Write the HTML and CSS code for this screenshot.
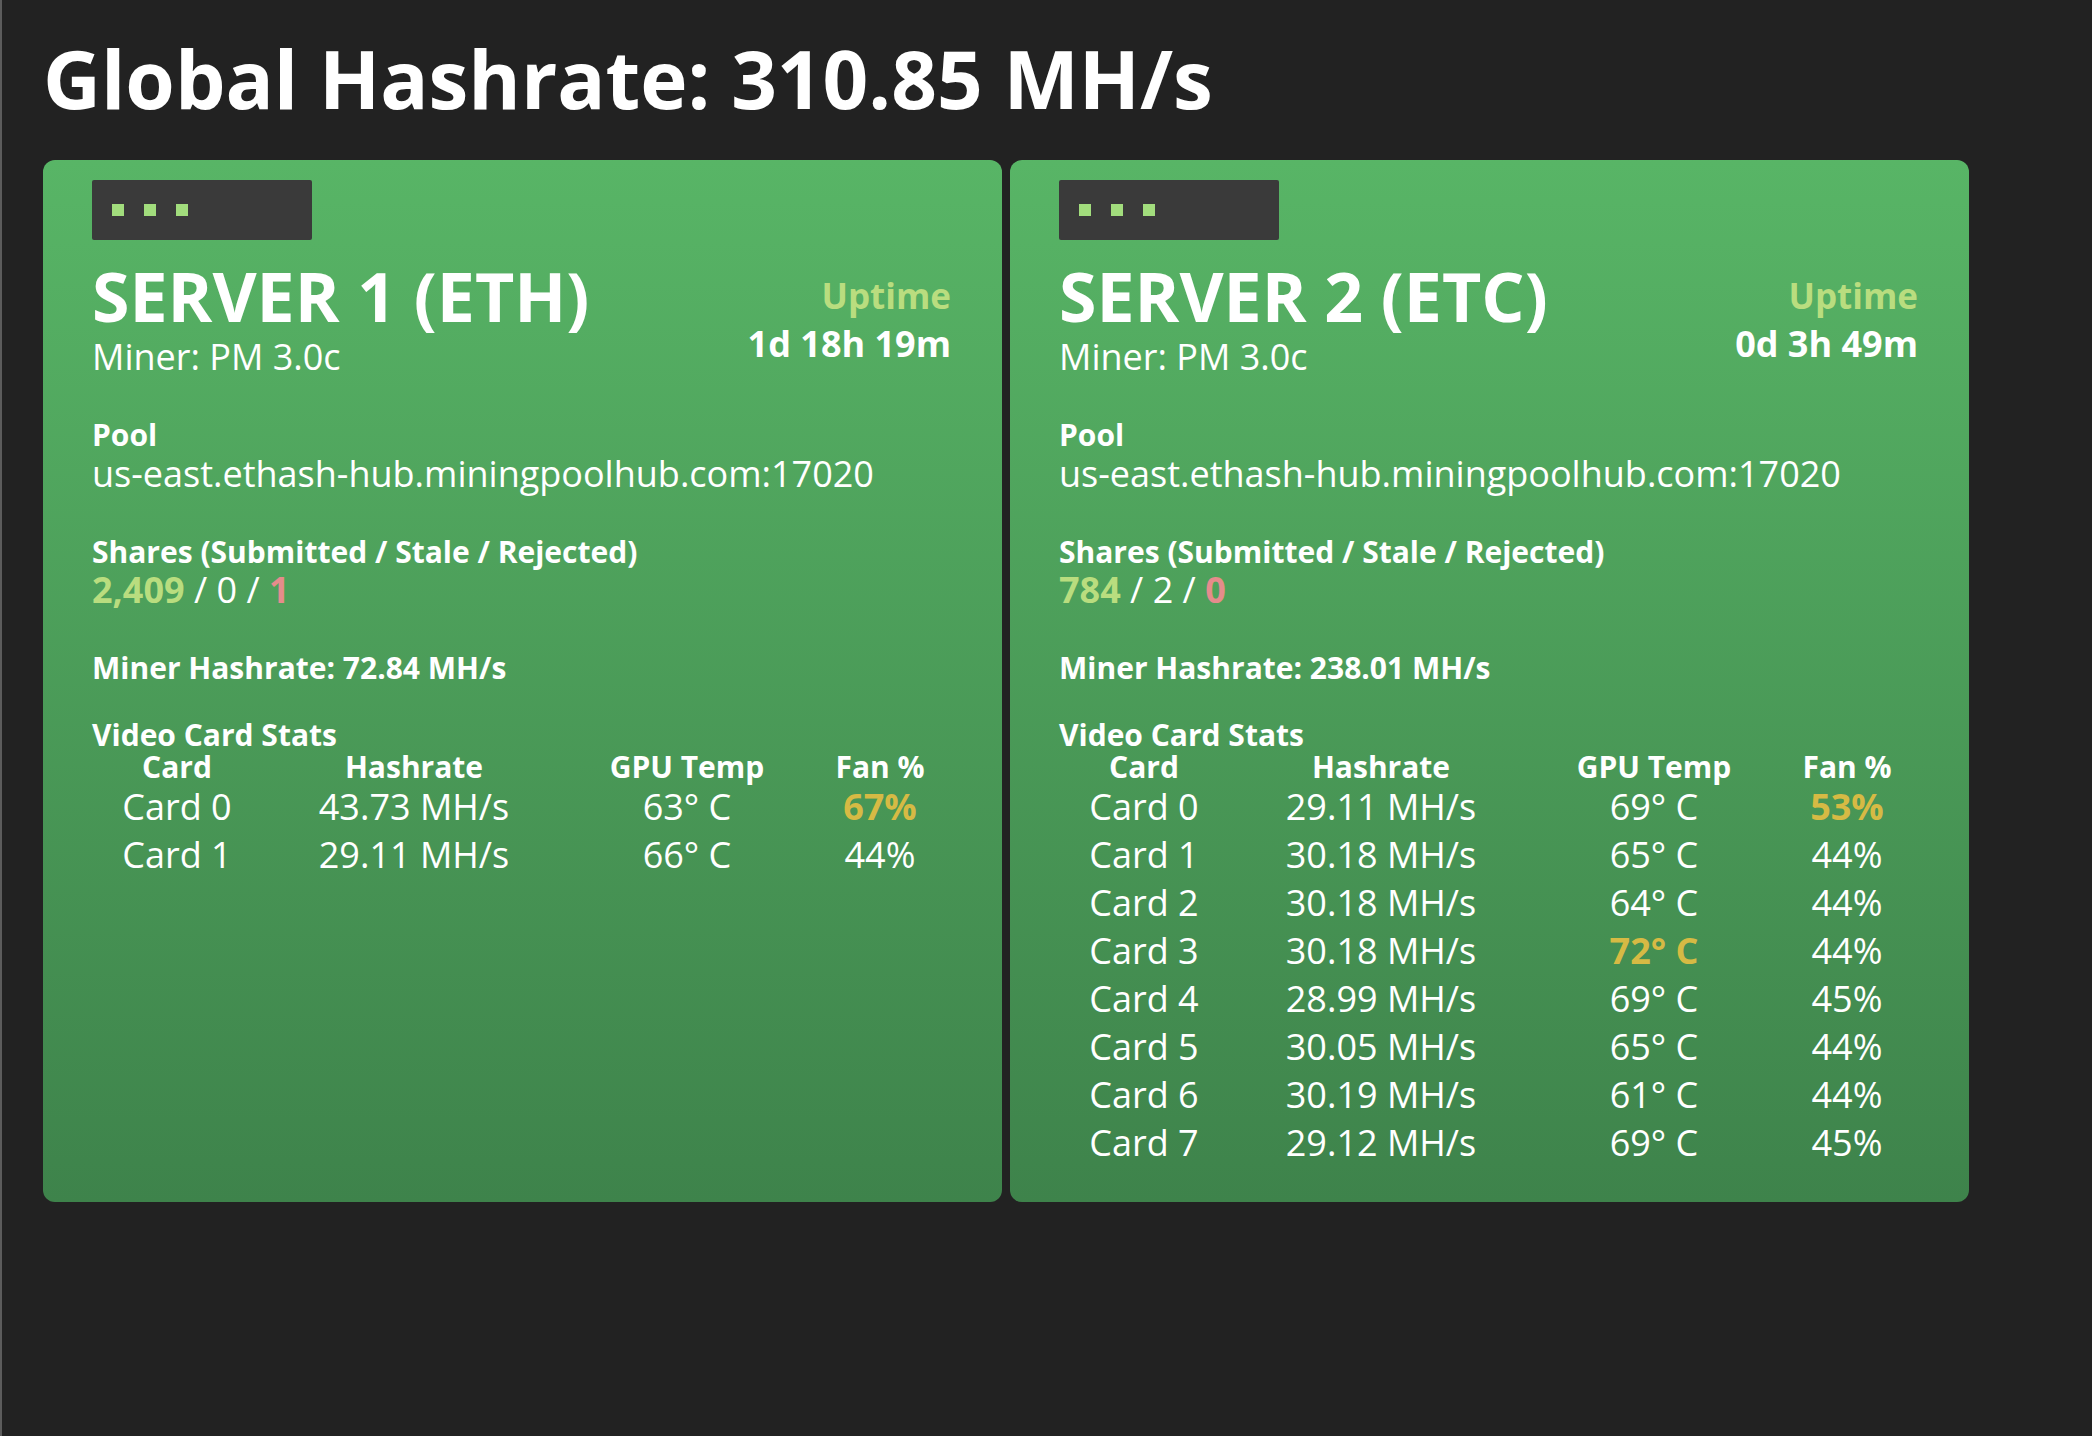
FILE: index.html
```html
<!DOCTYPE html>
<html>
<head>
<meta charset="utf-8">
<link rel="stylesheet" href="styles.css">
</head>
<body>
<div class="page">
  <h1 class="global">Global Hashrate: 310.85 MH/s</h1>
  <div class="servers">
    <section class="server">
      <div class="term"><span class="dot"></span><span class="dot"></span><span class="dot"></span></div>
      <div class="head">
        <div class="head-left">
          <h2 class="name">SERVER 1 (ETH)</h2>
          <div class="miner">Miner: PM 3.0c</div>
        </div>
        <div class="uptime">
          <div class="uptime-label">Uptime</div>
          <div class="uptime-value">1d 18h 19m</div>
        </div>
      </div>
      <div class="block">
        <div class="label pool">Pool</div>
        <div class="value">us-east.ethash-hub.miningpoolhub.com:17020</div>
      </div>
      <div class="block">
        <div class="label">Shares (Submitted / Stale / Rejected)</div>
        <div class="value"><span class="good">2,409</span> / 0 / <span class="bad">1</span></div>
      </div>
      <div class="block">
        <div class="label">Miner Hashrate: 72.84 MH/s</div>
      </div>
      <div class="block stats">
        <div class="label tight">Video Card Stats</div>
        <div class="cards">
          <div class="th">Card</div><div class="th">Hashrate</div><div class="th">GPU Temp</div><div class="th">Fan %</div>
          <div class="td">Card 0</div><div class="td">43.73 MH/s</div><div class="td">63° C</div><div class="td warn">67%</div>
          <div class="td">Card 1</div><div class="td">29.11 MH/s</div><div class="td">66° C</div><div class="td">44%</div>
        </div>
      </div>
    </section>
    <section class="server">
      <div class="term"><span class="dot"></span><span class="dot"></span><span class="dot"></span></div>
      <div class="head">
        <div class="head-left">
          <h2 class="name">SERVER 2 (ETC)</h2>
          <div class="miner">Miner: PM 3.0c</div>
        </div>
        <div class="uptime">
          <div class="uptime-label">Uptime</div>
          <div class="uptime-value">0d 3h 49m</div>
        </div>
      </div>
      <div class="block">
        <div class="label pool">Pool</div>
        <div class="value">us-east.ethash-hub.miningpoolhub.com:17020</div>
      </div>
      <div class="block">
        <div class="label">Shares (Submitted / Stale / Rejected)</div>
        <div class="value"><span class="good">784</span> / 2 / <span class="bad">0</span></div>
      </div>
      <div class="block">
        <div class="label">Miner Hashrate: 238.01 MH/s</div>
      </div>
      <div class="block stats">
        <div class="label tight">Video Card Stats</div>
        <div class="cards">
          <div class="th">Card</div><div class="th">Hashrate</div><div class="th">GPU Temp</div><div class="th">Fan %</div>
          <div class="td">Card 0</div><div class="td">29.11 MH/s</div><div class="td">69° C</div><div class="td warn">53%</div>
          <div class="td">Card 1</div><div class="td">30.18 MH/s</div><div class="td">65° C</div><div class="td">44%</div>
          <div class="td">Card 2</div><div class="td">30.18 MH/s</div><div class="td">64° C</div><div class="td">44%</div>
          <div class="td">Card 3</div><div class="td">30.18 MH/s</div><div class="td warn">72° C</div><div class="td">44%</div>
          <div class="td">Card 4</div><div class="td">28.99 MH/s</div><div class="td">69° C</div><div class="td">45%</div>
          <div class="td">Card 5</div><div class="td">30.05 MH/s</div><div class="td">65° C</div><div class="td">44%</div>
          <div class="td">Card 6</div><div class="td">30.19 MH/s</div><div class="td">61° C</div><div class="td">44%</div>
          <div class="td">Card 7</div><div class="td">29.12 MH/s</div><div class="td">69° C</div><div class="td">45%</div>
        </div>
      </div>
    </section>
  </div>
</div>
</body>
</html>
```

FILE: styles.css
```css
html, body {
  margin: 0;
  padding: 0;
  background: #222222;
  height: 100%;
}
body {
  font-family: "Open Sans", "DejaVu Sans", sans-serif;
  color: #ffffff;
  border-left: 2px solid #5c5c5c;
  box-sizing: border-box;
}
.page {
  padding: 30px 0 0 41px;
}
.global {
  margin: 0 0 34px 0;
  font-size: 80px;
  line-height: 96px;
  font-weight: 700;
}
.servers {
  display: flex;
  gap: 8px;
  align-items: stretch;
}
.server {
  width: 959px;
  box-sizing: border-box;
  padding: 20px 51px 35px 49px;
  border-radius: 12px;
  background: linear-gradient(180deg, #58b566 0%, #3e834b 100%);
}
.term {
  width: 220px;
  height: 60px;
  background: #3a3a3a;
  border-radius: 2px;
  display: flex;
  align-items: center;
  gap: 20px;
  padding-left: 20px;
  box-sizing: border-box;
}
.dot {
  width: 12px;
  height: 12px;
  background: #a2dd7d;
}
.head {
  display: flex;
  justify-content: space-between;
  align-items: flex-start;
  margin-top: 16px;
}
.name {
  margin: 0;
  font-size: 68px;
  line-height: 80px;
  font-weight: 700;
}
.miner {
  font-size: 36px;
  line-height: 42px;
}
.uptime {
  text-align: right;
  padding-top: 16px;
}
.uptime-label {
  font-size: 35px;
  line-height: 48px;
  font-weight: 700;
  color: #b9dd7f;
}
.uptime-value {
  font-size: 36px;
  line-height: 48px;
  font-weight: 700;
}
.block {
  margin-top: 39px;
}
.block.stats {
  margin-top: 34px;
}
.label {
  font-size: 30px;
  line-height: 35px;
  font-weight: 700;
}
.label.pool {
  line-height: 36px;
}
.label.tight {
  line-height: 32px;
}
.value {
  font-size: 36px;
  line-height: 42px;
}
.good {
  color: #b9dd7f;
  font-weight: 700;
}
.bad {
  color: #e58c8c;
  font-weight: 700;
}
.cards {
  display: grid;
  grid-template-columns: 170px 304px 242px 144px;
  text-align: center;
}
.th {
  font-size: 30px;
  line-height: 32px;
  font-weight: 700;
}
.td {
  font-size: 36px;
  line-height: 48px;
}
.warn {
  color: #d6ba44;
  font-weight: 700;
}
```
